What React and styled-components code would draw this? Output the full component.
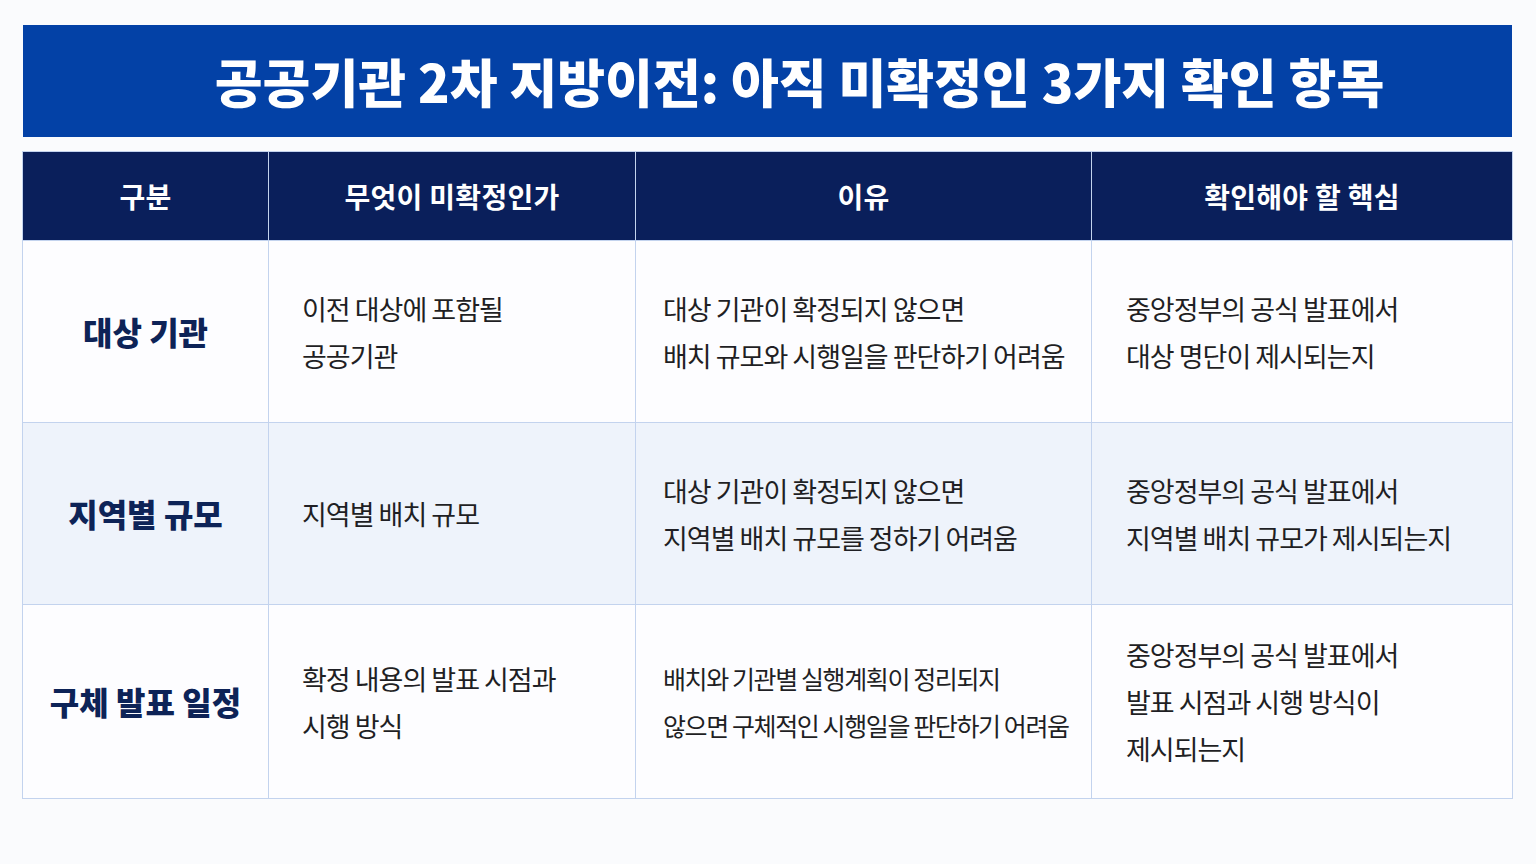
import React from 'react'
import styled, { createGlobalStyle } from 'styled-components'

const GlobalStyle = createGlobalStyle`
   body {
      margin: 0;
      background: #fafbfd;
      font-family: "Noto Sans CJK KR", "Noto Sans", sans-serif;
   }
`

const rows = [
   {
      label: '대상 기관',
      what: ['이전 대상에 포함될', '공공기관'],
      why: ['대상 기관이 확정되지 않으면', '배치 규모와 시행일을 판단하기 어려움'],
      check: ['중앙정부의 공식 발표에서', '대상 명단이 제시되는지'],
   },
   {
      label: '지역별 규모',
      what: ['지역별 배치 규모'],
      why: ['대상 기관이 확정되지 않으면', '지역별 배치 규모를 정하기 어려움'],
      check: ['중앙정부의 공식 발표에서', '지역별 배치 규모가 제시되는지'],
      alt: true,
   },
   {
      label: '구체 발표 일정',
      what: ['확정 내용의 발표 시점과', '시행 방식'],
      why: ['배치와 기관별 실행계획이 정리되지', '않으면 구체적인 시행일을 판단하기 어려움'],
      check: ['중앙정부의 공식 발표에서', '발표 시점과 시행 방식이', '제시되는지'],
      tight: true,
   },
]

function App() {
   return (
      <Page>
         <GlobalStyle />
         <TitleBar>
            <Title>공공기관 2차 지방이전: 아직 미확정인 3가지 확인 항목</Title>
         </TitleBar>
         <Table>
            <HeadCell>구분</HeadCell>
            <HeadCell>무엇이 미확정인가</HeadCell>
            <HeadCell>이유</HeadCell>
            <HeadCell last>확인해야 할 핵심</HeadCell>
            {rows.map((r, i) => (
               <React.Fragment key={i}>
                  <LabelCell alt={r.alt}>{r.label}</LabelCell>
                  <Cell alt={r.alt} pad={33}>
                     {r.what.map((l) => <Line key={l}>{l}</Line>)}
                  </Cell>
                  <Cell alt={r.alt} pad={27}>
                     {r.why.map((l) => <Line key={l} tight={r.tight}>{l}</Line>)}
                  </Cell>
                  <Cell alt={r.alt} pad={34} last>
                     {r.check.map((l) => <Line key={l}>{l}</Line>)}
                  </Cell>
               </React.Fragment>
            ))}
         </Table>
      </Page>
   )
}

const Page = styled.div`
   padding: 25px 0 0 22px;
   width: 1491px;
`

const TitleBar = styled.div`
   margin: 0 1px;
   height: 112px;
   background: #0341a6;
   display: flex;
   align-items: center;
   justify-content: center;
   padding-left: 64px;
   box-sizing: border-box;
`

const Title = styled.h1`
   margin: 0;
   color: #ffffff;
   font-size: 52px;
   font-weight: 900;
   letter-spacing: 0;
   line-height: 1;
`

const Table = styled.div`
   margin-top: 14px;
   width: 1491px;
   display: grid;
   grid-template-columns: 246px 367px 456px 1fr;
   grid-template-rows: 88px 182px 182px 194px;
   border: 1.5px solid #c3d3ee;
   box-sizing: border-box;
`

const HeadCell = styled.div`
   background: #0a1f5b;
   color: #ffffff;
   font-size: 28px;
   font-weight: 700;
   letter-spacing: 0.3px;
   display: flex;
   align-items: center;
   justify-content: center;
   border-right: ${(p) => (p.last ? 'none' : '1.5px solid #c3d3ee')};
`

const Cell = styled.div`
   background: ${(p) => (p.alt ? '#eef3fb' : '#fdfdff')};
   border-top: 1.5px solid #c3d3ee;
   border-right: ${(p) => (p.last ? 'none' : '1.5px solid #c3d3ee')};
   display: flex;
   flex-direction: column;
   justify-content: center;
   padding-left: ${(p) => p.pad}px;
   color: #1f1f24;
   font-size: 27px;
   letter-spacing: -1px;
   line-height: 47px;
`

const LabelCell = styled(Cell)`
   align-items: center;
   padding-left: 0;
   color: #0d2357;
   font-size: 32px;
   font-weight: 800;
   letter-spacing: 0;
`

const Line = styled.div`
   white-space: nowrap;
   font-size: ${(p) => (p.tight ? '25px' : 'inherit')};
   letter-spacing: ${(p) => (p.tight ? '-1.4px' : 'inherit')};
`

export default App
